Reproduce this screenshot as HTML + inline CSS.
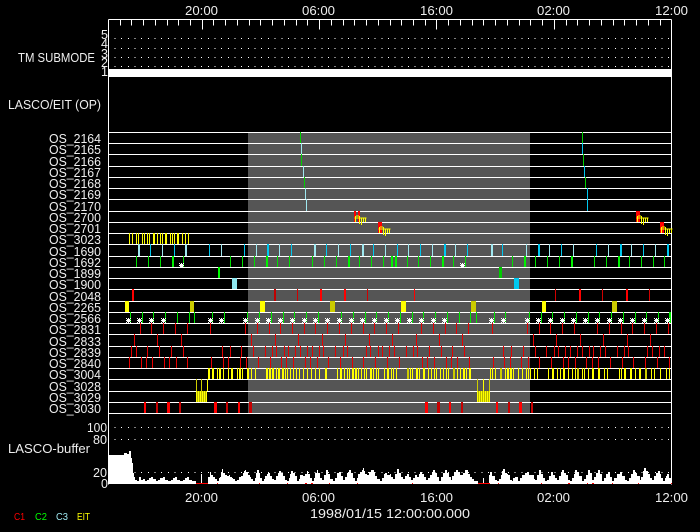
<!DOCTYPE html>
<html lang="en"><head><meta charset="utf-8"><title>LASCO/EIT</title>
<style>
html,body{margin:0;padding:0;background:#000;width:700px;height:532px;overflow:hidden}
svg{display:block}
text{font-family:"Liberation Sans",sans-serif;font-size:12.5px;fill:#eee}
.n{fill:none;stroke-width:1}
.w{fill:none;stroke-width:2}
</style></head><body>
<svg width="700" height="532" viewBox="0 0 700 532" shape-rendering="crispEdges">
<defs>
<path id="s" fill="#fff" d="M0 -2h1v5h-1zM-2 0h5v1h-5zM-1 -1h3v3h-3zM-2 -2h1v1h-1zM2 -2h1v1h-1zM-2 2h1v1h-1zM2 2h1v1h-1z"/>
<g id="f"><path class="n" stroke="#ff0" d="M354.5 218h12M355.5 216v6M359.5 216v8M361.5 218v7M363.5 218v4M365.5 218v4M356 216h3"/></g>
</defs>
<rect width="700" height="532" fill="#000"/>
<rect x="248" y="132" width="282" height="281" fill="#555"/>

<!-- top ticks -->
<g transform="translate(.5,.5)"><path class="n" stroke="#fff" d="M108 19H671M120 19v6M131 19v6M143 19v6M155 19v6M167 19v6M178 19v6M190 19v6M202 19v10M213 19v6M225 19v6M237 19v6M249 19v6M260 19v6M272 19v6M284 19v6M296 19v6M307 19v6M319 19v10M331 19v6M343 19v6M354 19v6M366 19v6M378 19v6M390 19v6M401 19v6M413 19v6M425 19v6M436 19v10M448 19v6M460 19v6M472 19v6M483 19v6M495 19v6M507 19v6M519 19v6M530 19v6M542 19v6M554 19v10M566 19v6M577 19v6M589 19v6M601 19v6M613 19v6M624 19v6M636 19v6M648 19v6M660 19v6"/>
<path class="n" stroke="#fff" stroke-dasharray="1 5.67" d="M114 38H670M114 48H670M114 57H670M114 66H670M114 427H670M114 439H670M114 472H670"/>
<path class="n" stroke="#fff" d="M108 132H671M108 143H671M108 154H671M108 166H671M108 177H671M108 188H671M108 199H671M108 211H671M108 222H671M108 233H671M108 244H671M108 256H671M108 267H671M108 278H671M108 289H671M108 301H671M108 312H671M108 323H671M108 334H671M108 346H671M108 357H671M108 368H671M108 379H671M108 391H671M108 402H671M108 413H671"/>
<path class="n" stroke="#fff" d="M108 19V484M671 19V484"/>
</g>
<rect x="108" y="69" width="564" height="8" fill="#fff"/>

<g transform="translate(.5,0)">
<!-- 2164-2170 -->
<path class="n" stroke="#00d000" d="M300 132v11M301 154v12M304 177v11M582 132v11M583 154v12M585 177v11"/>
<path class="n" stroke="#9fe8f0" d="M301 143v11M303 166v11M305 188v11M306 199v12"/>
<path class="n" stroke="#00c8f0" d="M582 143v11M584 166v11M587 188v11M587 199v12"/>
<!-- 3023 -->
<path class="n" stroke="#ff0" d="M129 233v11M132 233v11M136 233v11M138 233v11M142 233v11M144 233v11M147 233v11M149 233v11M153 233v11M154 233v11M157 233v11M160 233v11M162 233v11M165 233v11M166 233v11M170 233v11M172 233v11M174 233v11M177 233v11M178 233v11M182 233v11M185 233v11M188 233v11"/>
<!-- 1690 -->
<path class="n" stroke="#00c8f0" d="M150 244v12M174 244v12M209 244v12M244 244v12M291 244v12M326 244v12M350 244v12M373 244v12M397 244v12M420 244v12M467 244v12M502 244v12M561 244v12M596 244v12M643 244v12"/>
<path class="n" stroke="#9fe8f0" d="M162 244v12M221 244v12M256 244v12M279 244v12M338 244v12M385 244v12M408 244v12M432 244v12M455 244v12M526 244v12M549 244v12M573 244v12M608 244v12M631 244v12M655 244v12"/>
<!-- 1692 -->
<path class="n" stroke="#00e000" d="M136 256v11M148 256v11M160 256v11M183 256v11M230 256v11M242 256v11M254 256v11M277 256v11M289 256v11M312 256v11M324 256v11M336 256v11M359 256v11M371 256v11M383 256v11M407 256v11M418 256v11M430 256v11M453 256v11M465 256v11M512 256v11M535 256v11M547 256v11M559 256v11M594 256v11M606 256v11M629 256v11M641 256v11M653 256v11M664 256v11"/>
<!-- 2048 -->
<path class="n" stroke="#d00000" d="M297 289v12M320 289v12M367 289v12M555 289v12M602 289v12M649 289v12"/>
<path class="n" stroke="#f00" d="M414 289v12"/>
<!-- 2566 -->
<path class="n" stroke="#00e800" d="M130 312v11M142 312v11M153 312v11M165 312v11M177 312v11M189 312v11M194 312v11M212 312v11M224 312v11M247 312v11M259 312v11M271 312v11M283 312v11M294 312v11M306 312v11M318 312v11M341 312v11M353 312v11M365 312v11M376 312v11M388 312v11M400 312v11M412 312v11M423 312v11M435 312v11M447 312v11M459 312v11M470 312v11M476 312v11M494 312v11M505 312v11M529 312v11M541 312v11M552 312v11M564 312v11M576 312v11M588 312v11M599 312v11M611 312v11M623 312v11M635 312v11M646 312v11M658 312v11"/>
<!-- 2831 -->
<path class="n" stroke="#e80000" d="M140 323v11M151 323v11M163 323v11M175 323v11M187 323v11M210 323v11M245 323v11M257 323v11M269 323v11M280 323v11M292 323v11M304 323v11M315 323v11M327 323v11M339 323v11M351 323v11M363 323v11M374 323v11M386 323v11M398 323v11M421 323v11M433 323v11M445 323v11M456 323v11M468 323v11M492 323v11M527 323v11M539 323v11M550 323v11M562 323v11M574 323v11M597 323v11M609 323v11M621 323v11M632 323v11M644 323v11M656 323v11M668 323v11"/>
<!-- 2833 -->
<path class="n" stroke="#e80000" d="M134 334v12M157 334v12M181 334v12M251 334v12M275 334v12M298 334v12M322 334v12M345 334v12M369 334v12M392 334v12M416 334v12M439 334v12M462 334v12M533 334v12M556 334v12M580 334v12M603 334v12M627 334v12M650 334v12"/>
<!-- 2839 -->
<path class="n" stroke="#e80000" d="M131 346v11M136 346v11M147 346v11M159 346v11M171 346v11M183 346v11M222 346v11M230 346v11M241 346v11M253 346v11M265 346v11M272 346v11M276 346v11M284 346v11M288 346v11M295 346v11M300 346v11M307 346v11M312 346v11M319 346v11M323 346v11M335 346v11M343 346v11M347 346v11M366 346v11M370 346v11M378 346v11M382 346v11M389 346v11M394 346v11M406 346v11M413 346v11M417 346v11M429 346v11M441 346v11M452 346v11M464 346v11M503 346v11M511 346v11M523 346v11M535 346v11M546 346v11M554 346v11M558 346v11M565 346v11M570 346v11M577 346v11M582 346v11M589 346v11M593 346v11M600 346v11M605 346v11M617 346v11M624 346v11M628 346v11M647 346v11M652 346v11M659 346v11M664 346v11"/>
<!-- 2840 -->
<path class="n" stroke="#e80000" d="M129 357v11M141 357v11M146 357v11M152 357v11M164 357v11M169 357v11M176 357v11M187 357v11M211 357v11M223 357v11M228 357v11M240 357v11M246 357v11M258 357v11M270 357v11M281 357v11M286 357v11M293 357v11M305 357v11M310 357v11M317 357v11M328 357v11M340 357v11M352 357v11M363 357v11M375 357v11M387 357v11M399 357v11M422 357v11M427 357v11M434 357v11M446 357v11M451 357v11M457 357v11M469 357v11M493 357v11M504 357v11M510 357v11M521 357v11M528 357v11M539 357v11M551 357v11M563 357v11M568 357v11M575 357v11M586 357v11M592 357v11M598 357v11M610 357v11M622 357v11M633 357v11M645 357v11M657 357v11M669 357v11"/>
<!-- 3004 -->
<path class="n" stroke="#ff0" d="M217 368v11M223 368v11M228 368v11M237 368v11M242 368v11M251 368v11M255 368v11M276 368v11M285 368v11M287 368v11M290 368v11M293 368v11M296 368v11M299 368v11M303 368v11M307 368v11M311 368v11M315 368v11M319 368v11M337 368v11M344 368v11M347 368v11M349 368v11M358 368v11M361 368v11M364 368v11M366 368v11M373 368v11M376 368v11M378 368v11M384 368v11M391 368v11M393 368v11M396 368v11M410 368v11M412 368v11M419 368v11M428 368v11M431 368v11M434 368v11M436 368v11M440 368v11M443 368v11M446 368v11M448 368v11M457 368v11M460 368v11M466 368v11M490 368v11M492 368v11M495 368v11M505 368v11M513 368v11M518 368v11M522 368v11M526 368v11M528 368v11M530 368v11M534 368v11M537 368v11M548 368v11M557 368v11M560 368v11M568 368v11M572 368v11M575 368v11M582 368v11M584 368v11M588 368v11M598 368v11M599 368v11M604 368v11M607 368v11M619 368v11M621 368v11M635 368v11M651 368v11M654 368v11M660 368v11M666 368v11M669 368v11"/>
<!-- 3028 -->
<path class="n" stroke="#ff0" d="M207 379v12M483 379v12"/>
<path class="n" stroke="#cc0" d="M196 379v12M201 379v12M477 379v12M489 379v12"/>
</g>
<!-- 1690 wide -->
<path class="w" stroke="#00c8f0" d="M268 244v12M445 244v12M539 244v12M621 244v12M668 244v12"/>
<path class="w" stroke="#9fe8f0" d="M139 244v12M186 244v12M315 244v12M363 244v12M492 244v12"/>
<path class="w" stroke="#00f000" d="M173 256v11M267 256v11M349 256v11M392 256v11M396 256v11M443 256v11M525 256v11M572 256v11M619 256v11"/>
<path class="w" stroke="#00f000" d="M670 312v11"/>
<!-- 2048 wide -->
<path class="w" stroke="#f00" d="M133 289v12M321 289v12M345 289v12M580 289v12M627 289v12"/>
<path class="w" stroke="#c00000" d="M275 289v12"/>
<!-- 3004 wide -->
<path class="w" stroke="#ff0" d="M209 368v11M213 368v11M220 368v11M232 368v11M240 368v11M248 368v11M267 368v11M270 368v11M273 368v11M279 368v11M283 368v11M326 368v11M341 368v11M353 368v11M356 368v11M371 368v11M388 368v11M417 368v11M424 368v11M464 368v11M470 368v11M508 368v11M511 368v11M553 368v11M564 368v11M593 368v11M625 368v11M631 368v11M640 368v11"/>
<path class="w" stroke="#cc0" d="M408 368v11M454 368v11M501 368v11M578 368v11M646 368v11"/>
<!-- Blocks -->
<g>
<rect x="218" y="267" width="2" height="11" fill="#0f0"/>
<rect x="499" y="267" width="3" height="11" fill="#0c0"/>
<rect x="232" y="278" width="5" height="11" fill="#8fe8f0"/>
<rect x="514" y="278" width="5" height="11" fill="#00c8f0"/>
<rect x="125" y="301" width="4" height="11" fill="#ff0"/>
<rect x="190" y="301" width="4" height="11" fill="#cc0"/>
<rect x="260" y="301" width="5" height="11" fill="#ff0"/>
<rect x="330" y="301" width="5" height="11" fill="#cc0"/>
<rect x="401" y="301" width="5" height="11" fill="#ff0"/>
<rect x="471" y="301" width="5" height="11" fill="#cc0"/>
<rect x="542" y="301" width="4" height="11" fill="#ff0"/>
<rect x="612" y="301" width="5" height="11" fill="#cc0"/>
<!-- red 2700/2701 -->
<path fill="#f00" d="M354 211h2v11h-2zM358 211h2v11h-2zM378 222h4v11h-4zM636 211h4v11h-4zM660 222h4v11h-4z"/>
<!-- 3029 -->
<path fill="#b8b800" d="M196 391h11v11h-11zM477 391h12v11h-12z"/>
<path fill="#ff0" d="M196 391h1v11h-1zM198 391h1v11h-1zM200 391h1v11h-1zM202 391h1v11h-1zM204 391h1v11h-1zM206 391h1v11h-1zM477 391h1v11h-1zM479 391h1v11h-1zM481 391h1v11h-1zM483 391h1v11h-1zM485 391h1v11h-1zM487 391h1v11h-1zM489 391h1v11h-1z"/>
<!-- 3030 -->
<path fill="#f00" d="M144 402h2v11h-2zM167 402h3v11h-3zM214 402h3v11h-3zM238 402h2v11h-2zM425 402h3v11h-3zM449 402h2v11h-2zM496 402h2v11h-2zM519 402h3v11h-3z"/>
<path fill="#c80000" d="M156 402h2v11h-2zM179 402h2v11h-2zM226 402h2v11h-2zM249 402h3v11h-3zM437 402h3v11h-3zM461 402h2v11h-2zM508 402h2v11h-2zM531 402h2v11h-2z"/>
</g>
<!-- fm marks -->
<use href="#f"/><use href="#f" x="24" y="11"/><use href="#f" x="282"/><use href="#f" x="306" y="11"/>
<!-- stars -->
<use href="#s" x="181" y="265"/><use href="#s" x="462" y="265"/>
<g>
<use href="#s" x="128" y="320"/><use href="#s" x="139" y="320"/><use href="#s" x="151" y="320"/><use href="#s" x="163" y="320"/><use href="#s" x="210" y="320"/><use href="#s" x="221" y="320"/><use href="#s" x="245" y="320"/><use href="#s" x="257" y="320"/><use href="#s" x="268" y="320"/><use href="#s" x="280" y="320"/><use href="#s" x="292" y="320"/><use href="#s" x="304" y="320"/><use href="#s" x="315" y="320"/><use href="#s" x="327" y="320"/><use href="#s" x="339" y="320"/><use href="#s" x="351" y="320"/><use href="#s" x="362" y="320"/><use href="#s" x="374" y="320"/><use href="#s" x="386" y="320"/><use href="#s" x="397" y="320"/><use href="#s" x="409" y="320"/><use href="#s" x="421" y="320"/><use href="#s" x="433" y="320"/><use href="#s" x="444" y="320"/><use href="#s" x="491" y="320"/><use href="#s" x="503" y="320"/><use href="#s" x="527" y="320"/><use href="#s" x="538" y="320"/><use href="#s" x="550" y="320"/><use href="#s" x="562" y="320"/><use href="#s" x="573" y="320"/><use href="#s" x="585" y="320"/><use href="#s" x="597" y="320"/><use href="#s" x="609" y="320"/><use href="#s" x="620" y="320"/><use href="#s" x="632" y="320"/><use href="#s" x="644" y="320"/><use href="#s" x="656" y="320"/><use href="#s" x="667" y="320"/>
</g>

<!-- buffer silhouette -->
<path fill="#fff" d="M108 484V455H124V453H127V454H129V451H131V458H132V463H133V473H134V477H135V480H137V481H139V477H141V480H143V479H145V481H147V480H149V478H151V477H153V479H156V481H158V480H160V478H163V477H165V480H168V481H171V480H173V478H175V477H177V480H180V481H183V480H185V478H187V477H189V480H192V481H196V484Z"/>
<path fill="#fff" d="M201 474h1v10h-1z"/>
<path fill="#fff" d="M208 484V477H210V472H211V475H213V477H215V479H217V481H219V478H220V477H221V472H222V469H223V473H225V475H227V476H229V475H230V477H232V478H233V479H235V481H237V480H239V477H241V476H243V473H244V471H245V470H246V472H248V475H250V477H251V479H253V481H255V478H256V473H257V470H259V473H260V478H262V481H264V479H265V476H267V474H268V473H270V476H272V479H274V480H276V476H278V473H279V471H281V473H283V476H285V480H287V481H289V478H290V474H291V471H293V473H295V476H297V481H299V479H300V475H303V476H305V474H307V471H308V474H310V478H312V482H314V478H315V473H317V470H318V473H320V478H322V480H324V475H326V470H328V474H330V479H333V482H335V478H337V473H339V472H341V476H343V480H345V477H347V473H349V470H351V473H353V478H355V482H357V478H358V474H360V472H362V470H363V468H364V471H365V474H367V475H369V472H371V470H374V472H375V476H377V479H380V482H382V478H384V474H385V473H387V475H390V474H391V477H393V479H395V474H397V469H399V473H401V477H403V479H405V476H407V474H409V477H411V480H413V478H415V475H417V477H419V474H420V472H422V474H424V477H426V480H428V478H430V475H432V472H433V470H435V473H437V477H439V482H441V477H443V473H445V470H447V473H449V477H451V480H452V476H454V472H456V470H458V472H460V475H463V473H465V470H468V474H470V477H472V479H474V481H476V482H478V484Z"/>
<path fill="#fff" d="M483 478h1v6h-1z"/>
<path fill="#fff" d="M489 484V475H490V472H492V476H495V480H497V481H499V479H501V475H502V471H503V469H505V473H507V474H508V475H510V480H512V481H513V478H515V477H518V482H520V478H522V475H525V473H527V472H529V475H532V475H534V479H535V480H537V475H539V470H541V474H543V478H545V482H547V480H549V476H551V472H553V475H555V478H557V480H559V476H561V472H562V470H564V473H566V475H568V480H570V482H572V478H574V474H575V470H577V472H579V476H582V482H584V479H586V475H588V470H590V473H592V480H594V477H596V473H598V470H600V474H602V482H604V478H606V474H608V472H610V477H612V482H614V478H617V474H620V472H622V476H625V480H627V482H629V478H631V474H633V470H635V473H637V476H640V480H641V477H643V471H644V468H646V471H648V474H650V478H652V480H654V476H656V473H658V471H660V474H661V478H663V482H665V478H666V476H667V474H669V478H671V484Z"/>
<path fill="#fff" d="M135 481h61v3h-61zM208 481h270v3h-270zM489 481h183v3h-183z"/>
<rect x="108" y="483" width="564" height="1" fill="#fff"/>
<path fill="#f00" d="M196 483h12v1h-12zM217 483h1v1h-1zM259 483h1v1h-1zM287 483h1v1h-1zM305 483h2v1h-2zM311 483h2v1h-2zM329 483h1v1h-1zM357 483h1v1h-1zM412 483h1v1h-1zM478 483h12v1h-12zM498 483h1v1h-1zM541 483h1v1h-1zM568 483h2v1h-2zM587 483h1v1h-1zM592 483h2v1h-2zM612 483h1v1h-1zM638 483h1v1h-1zM671 483h1v1h-1z"/>

<!-- text -->
<g shape-rendering="auto">
<text x="185" y="15" textLength="33" lengthAdjust="spacingAndGlyphs">20:00</text>
<text x="302" y="15" textLength="33" lengthAdjust="spacingAndGlyphs">06:00</text>
<text x="420" y="15" textLength="33" lengthAdjust="spacingAndGlyphs">16:00</text>
<text x="537" y="15" textLength="33" lengthAdjust="spacingAndGlyphs">02:00</text>
<text x="655" y="15" textLength="33" lengthAdjust="spacingAndGlyphs">12:00</text>
<text x="101" y="39">5</text><text x="101" y="48">4</text><text x="101" y="58">3</text><text x="101" y="67">2</text><text x="101" y="76">1</text>
<text x="18" y="62" textLength="77" lengthAdjust="spacingAndGlyphs">TM SUBMODE</text>
<text x="8" y="109" textLength="93" lengthAdjust="spacingAndGlyphs">LASCO/EIT (OP)</text>
<text x="49" y="143" textLength="52" lengthAdjust="spacingAndGlyphs">OS_2164</text>
<text x="49" y="154" textLength="52" lengthAdjust="spacingAndGlyphs">OS_2165</text>
<text x="49" y="166" textLength="52" lengthAdjust="spacingAndGlyphs">OS_2166</text>
<text x="49" y="177" textLength="52" lengthAdjust="spacingAndGlyphs">OS_2167</text>
<text x="49" y="188" textLength="52" lengthAdjust="spacingAndGlyphs">OS_2168</text>
<text x="49" y="199" textLength="52" lengthAdjust="spacingAndGlyphs">OS_2169</text>
<text x="49" y="211" textLength="52" lengthAdjust="spacingAndGlyphs">OS_2170</text>
<text x="49" y="222" textLength="52" lengthAdjust="spacingAndGlyphs">OS_2700</text>
<text x="49" y="233" textLength="52" lengthAdjust="spacingAndGlyphs">OS_2701</text>
<text x="49" y="244" textLength="52" lengthAdjust="spacingAndGlyphs">OS_3023</text>
<text x="49" y="256" textLength="52" lengthAdjust="spacingAndGlyphs">OS_1690</text>
<text x="49" y="267" textLength="52" lengthAdjust="spacingAndGlyphs">OS_1692</text>
<text x="49" y="278" textLength="52" lengthAdjust="spacingAndGlyphs">OS_1899</text>
<text x="49" y="289" textLength="52" lengthAdjust="spacingAndGlyphs">OS_1900</text>
<text x="49" y="301" textLength="52" lengthAdjust="spacingAndGlyphs">OS_2048</text>
<text x="49" y="312" textLength="52" lengthAdjust="spacingAndGlyphs">OS_2265</text>
<text x="49" y="323" textLength="52" lengthAdjust="spacingAndGlyphs">OS_2566</text>
<text x="49" y="334" textLength="52" lengthAdjust="spacingAndGlyphs">OS_2831</text>
<text x="49" y="346" textLength="52" lengthAdjust="spacingAndGlyphs">OS_2833</text>
<text x="49" y="357" textLength="52" lengthAdjust="spacingAndGlyphs">OS_2839</text>
<text x="49" y="368" textLength="52" lengthAdjust="spacingAndGlyphs">OS_2840</text>
<text x="49" y="379" textLength="52" lengthAdjust="spacingAndGlyphs">OS_3004</text>
<text x="49" y="391" textLength="52" lengthAdjust="spacingAndGlyphs">OS_3028</text>
<text x="49" y="402" textLength="52" lengthAdjust="spacingAndGlyphs">OS_3029</text>
<text x="49" y="413" textLength="52" lengthAdjust="spacingAndGlyphs">OS_3030</text>
<text x="87" y="432" textLength="20" lengthAdjust="spacingAndGlyphs">100</text>
<text x="93" y="444" textLength="14" lengthAdjust="spacingAndGlyphs">80</text>
<text x="8" y="453" textLength="82" lengthAdjust="spacingAndGlyphs">LASCO-buffer</text>
<text x="93" y="477" textLength="14" lengthAdjust="spacingAndGlyphs">20</text>
<text x="101" y="488">0</text>
<text x="185" y="502" textLength="33" lengthAdjust="spacingAndGlyphs">20:00</text>
<text x="302" y="502" textLength="33" lengthAdjust="spacingAndGlyphs">06:00</text>
<text x="420" y="502" textLength="33" lengthAdjust="spacingAndGlyphs">16:00</text>
<text x="537" y="502" textLength="33" lengthAdjust="spacingAndGlyphs">02:00</text>
<text x="655" y="502" textLength="33" lengthAdjust="spacingAndGlyphs">12:00</text>
<text x="310" y="518" textLength="160" lengthAdjust="spacingAndGlyphs">1998/01/15 12:00:00.000</text>
<text x="14" y="520" style="font-size:10px;fill:#f00" textLength="11" lengthAdjust="spacingAndGlyphs">C1</text>
<text x="35" y="520" style="font-size:10px;fill:#0f0" textLength="12" lengthAdjust="spacingAndGlyphs">C2</text>
<text x="56" y="520" style="font-size:10px;fill:#9fe8f0" textLength="12" lengthAdjust="spacingAndGlyphs">C3</text>
<text x="77" y="520" style="font-size:10px;fill:#ff0" textLength="13" lengthAdjust="spacingAndGlyphs">EIT</text>
</g>
</svg>
</body></html>
